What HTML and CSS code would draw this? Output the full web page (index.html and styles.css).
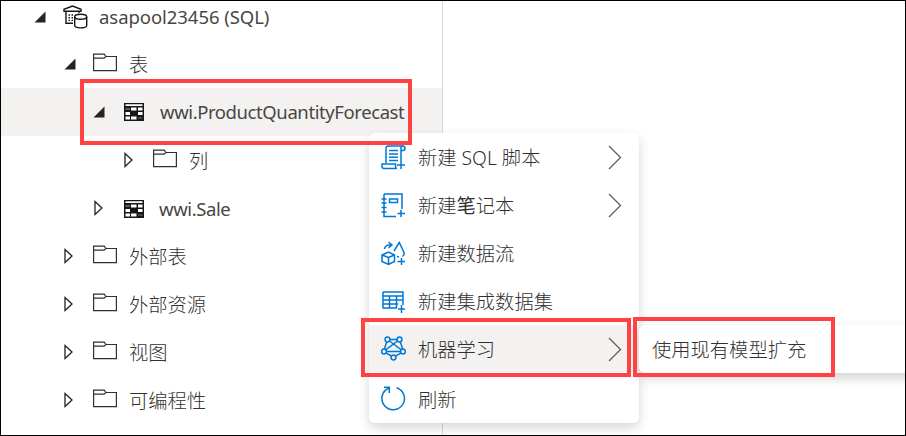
FILE: index.html
```html
<!DOCTYPE html>
<html lang="zh-CN">
<head>
<meta charset="utf-8">
<title>asapool23456</title>
<link rel="stylesheet" href="styles.css">
</head>
<body>
<svg class="defs" width="0" height="0">
  <symbol id="open" viewBox="0 0 12 12"><path d="M11.5 0.5V11.5H0.5Z" fill="#252423"/></symbol>
  <symbol id="closed" viewBox="0 0 10 16"><path d="M1 1.6V14.4L8 8Z" fill="none" stroke="#252423" stroke-width="1.3"/></symbol>
  <symbol id="folder" viewBox="0 0 24 19"><path d="M.6 1.1H11.2L13 3.5H23.4V17.6H.6ZM.6 5.2H11L13 3.5" fill="none" stroke="#323130" stroke-width="1.2"/></symbol>
  <symbol id="table" viewBox="0 0 20 18"><path d="M0 0H20V18H0Z" fill="#171717"/><path d="M1.5 1.3H18.5V3H1.5ZM7 4.5H12.5V7.5H7ZM14 4.5H18.5V7.5H14ZM1.5 9H6V12H1.5ZM14 9H18.5V12H14ZM1.5 13.5H6V16.5H1.5ZM7 13.5H12.5V16.5H7Z" fill="#fff"/><path d="M1.5 5.3H6V6.8H1.5ZM14 14.4H18.5V15.6H14Z" fill="#777"/></symbol>
  <symbol id="chevron" viewBox="0 0 14 26"><path d="M1 1L12.5 12.5L1 24" fill="none" stroke="#605e5c" stroke-width="1.3"/></symbol>
</svg>
<div class="app">
  <div class="tree">
    <div class="row l0"><svg class="tw open"><use href="#open"/></svg>
      <svg class="pool" viewBox="0 0 25 24" fill="none" stroke="#171717" stroke-width="1.4"><path d="M1 7V4.3L9.5 1L18 4.3V7M1 6.3H18M3 7V18.3H10M16 6.5V8"/><path d="M5.5 10H7M8.5 10H10M5.5 12.7H7M8.5 12.7H10M5.5 15.4H7M8.5 15.4H10"/><ellipse cx="17.7" cy="11.8" rx="6" ry="2.5" fill="#fff"/><path d="M11.7 11.8V20.5C11.7 23.6 23.7 23.6 23.7 20.5V11.8"/></svg>
      <span class="lat">asapool23456 (SQL)</span></div>
    <div class="row l1"><svg class="tw open"><use href="#open"/></svg><svg class="folder"><use href="#folder"/></svg><span>表</span></div>
    <div class="row l2 selected"><svg class="tw open"><use href="#open"/></svg><svg class="table"><use href="#table"/></svg><span class="lat long">wwi.ProductQuantityForecast</span></div>
    <div class="row l3"><svg class="tw closed"><use href="#closed"/></svg><svg class="folder"><use href="#folder"/></svg><span>列</span></div>
    <div class="row l2 sale"><svg class="tw closed"><use href="#closed"/></svg><svg class="table"><use href="#table"/></svg><span class="lat long">wwi.Sale</span></div>
    <div class="row l1"><svg class="tw closed"><use href="#closed"/></svg><svg class="folder"><use href="#folder"/></svg><span>外部表</span></div>
    <div class="row l1"><svg class="tw closed"><use href="#closed"/></svg><svg class="folder"><use href="#folder"/></svg><span>外部资源</span></div>
    <div class="row l1"><svg class="tw closed"><use href="#closed"/></svg><svg class="folder"><use href="#folder"/></svg><span>视图</span></div>
    <div class="row l1"><svg class="tw closed"><use href="#closed"/></svg><svg class="folder"><use href="#folder"/></svg><span>可编程性</span></div>
  </div>
  <div class="menu">
    <div class="item"><svg class="mi" viewBox="0 0 25 25"><path d="M5 18V3.5Q5 1 7.5 1H21.5Q24 1 24 3.3Q24 5.5 22 5.5H20V16M20 5.5V3Q20 1 22 1M14.5 23.5H3Q1 23.5 1 21V19H14.5V21.5Q14.5 23.5 16 23.5M8 5.5H17M8 9H17M8 12.3H17M8 15.5H17M20 16V24M16 20H24"/></svg><span>新建 SQL 脚本</span><svg class="chev"><use href="#chevron"/></svg></div>
    <div class="item"><svg class="mi" viewBox="0 0 25 25"><path d="M3 1H21V16M3 1V23.5H15M8.5 6H16.5V9.5H8.5ZM.5 6H5.5M.5 10H5.5M.5 14.5H5.5M.5 19H5.5M20 17V24M16.5 20.5H24"/></svg><span>新建<b>笔</b>记本</span><svg class="chev"><use href="#chevron"/></svg></div>
    <div class="item"><svg class="mi" viewBox="0 0 25 25"><path d="M1 14L7.5 11L13.5 14V20.5L7.5 23.5L1 20.5ZM1 14L7.5 16.5L13.5 14M7.5 16.5V23.5M3.5 8Q4 3.5 10 4M7.5 1L11 4L7.5 7M13 10L18.3 1.5L23 11.5Q23.6 14 21.5 15.5M16 15.5L18 16M20.5 17V24M16.5 20.5H24"/></svg><span>新建数据流</span></div>
    <div class="item"><svg class="mi" viewBox="0 0 25 25"><path d="M2 3H22V16M2 3V19H16M2 7H22M2 11H22M2 15H17M8.5 7V19M15.5 7V19M20.5 16V24M17 20H24"/></svg><span>新建集成数据集</span></div>
    <div class="item hover"><svg class="mi" viewBox="0 0 25 25"><path d="M6.5 3.5H18.5L22.5 15.5L12.5 21.5L2.5 15.5ZM6.5 3.5L22.5 15.5H2.5L18.5 3.5"/><g fill="#f3f2f1"><circle cx="6.5" cy="3.5" r="2.4"/><circle cx="18.5" cy="3.5" r="2.4"/><circle cx="22" cy="15.5" r="2.4"/><circle cx="3" cy="15.5" r="2.4"/><circle cx="12.5" cy="21.5" r="2.4"/></g></svg><span>机器学习</span><svg class="chev"><use href="#chevron"/></svg></div>
    <div class="item last"><svg class="mi" viewBox="0 0 25 25"><path d="M15.5 1.7A11.3 11.3 0 1 1 7.5 2.2M3 1.3H8.3V7"/></svg><span>刷新</span></div>
  </div>
  <div class="submenu"><span>使用现有模型扩充</span></div>
  <div class="mark m1"></div><div class="mark m2"></div><div class="mark m3"></div>
</div>
</body>
</html>
```
FILE: styles.css
```css
* { box-sizing: border-box; }
body { margin: 0; }
.defs { position: absolute; }
.app {
  position: relative; width: 906px; height: 436px; overflow: hidden;
  border: 1px solid #000; background: #fff; color: #323130;
  font: 300 19.3px/48px "Noto Sans", "Noto Sans CJK SC", sans-serif;
}
span { white-space: nowrap; padding-top: 2px; }
.lat { color: #484644; font-size: 18.5px; font-weight: 400; letter-spacing: -.05px; padding-top: 0; }
.long { letter-spacing: -.41px; }
.tree { width: 442px; height: 434px; border-right: 1px solid #d9d8d6; overflow: hidden; }
.row { display: flex; align-items: center; height: 48px; }
.row:first-child { height: 39px; }
.row:first-child > * { margin-top: -7px; }
.l0 { padding-left: 33px; }
.l1 { padding-left: 63px; }
.l2 { padding-left: 92px; }
.l3 { padding-left: 123px; }
.selected { background: #f3f2f1; }
.tree svg { flex: none; }
.tw { margin-right: 17px; }
.tw.open { width: 12px; height: 12px; }
.tw.closed { width: 10px; height: 16px; margin-right: 19px; }
.folder { width: 24px; height: 19px; margin: -3px 12px 0 0; }
.table { width: 20px; height: 18px; margin: 0 16px 0 2px; }
.pool { width: 25px; height: 24px; margin-right: 11px; }
.sale .lat { padding-top: 2px; }
.sale .table { margin: 1px 15px 0 2px; }
.sale .tw { margin-left: 1px; margin-right: 18px; }
.menu {
  position: absolute; left: 368px; top: 132px; width: 270px; height: 290px;
  background: #fff; border-radius: 6px; box-shadow: 0 5px 12px rgba(0,0,0,.16);
}
.item { display: flex; align-items: center; height: 48px; padding: 0 17px 0 12px; }
.item.hover { background: #f3f2f1; height: 47px; }
.item.last { height: 53px; }
.mi { width: 25px; height: 25px; margin-right: 12px; fill: none; stroke: #0078d4; stroke-width: 1.5; }
.chev { width: 14px; height: 26px; margin: 2px 0 0 auto; }
.submenu {
  position: absolute; left: 638px; top: 324px; width: 290px; height: 48px; padding: 1px 0 0 13px;
  background: #fff; border-radius: 6px; box-shadow: 0 5px 12px rgba(0,0,0,.18);
}
.mark { position: absolute; border: 4px solid #ff4343; }
.m1 { left: 79px; top: 78px; width: 332px; height: 66px; }
.m2 { left: 360px; top: 317px; width: 270px; height: 59px; }
.m3 { left: 632px; top: 316px; width: 202px; height: 60px; }
```
